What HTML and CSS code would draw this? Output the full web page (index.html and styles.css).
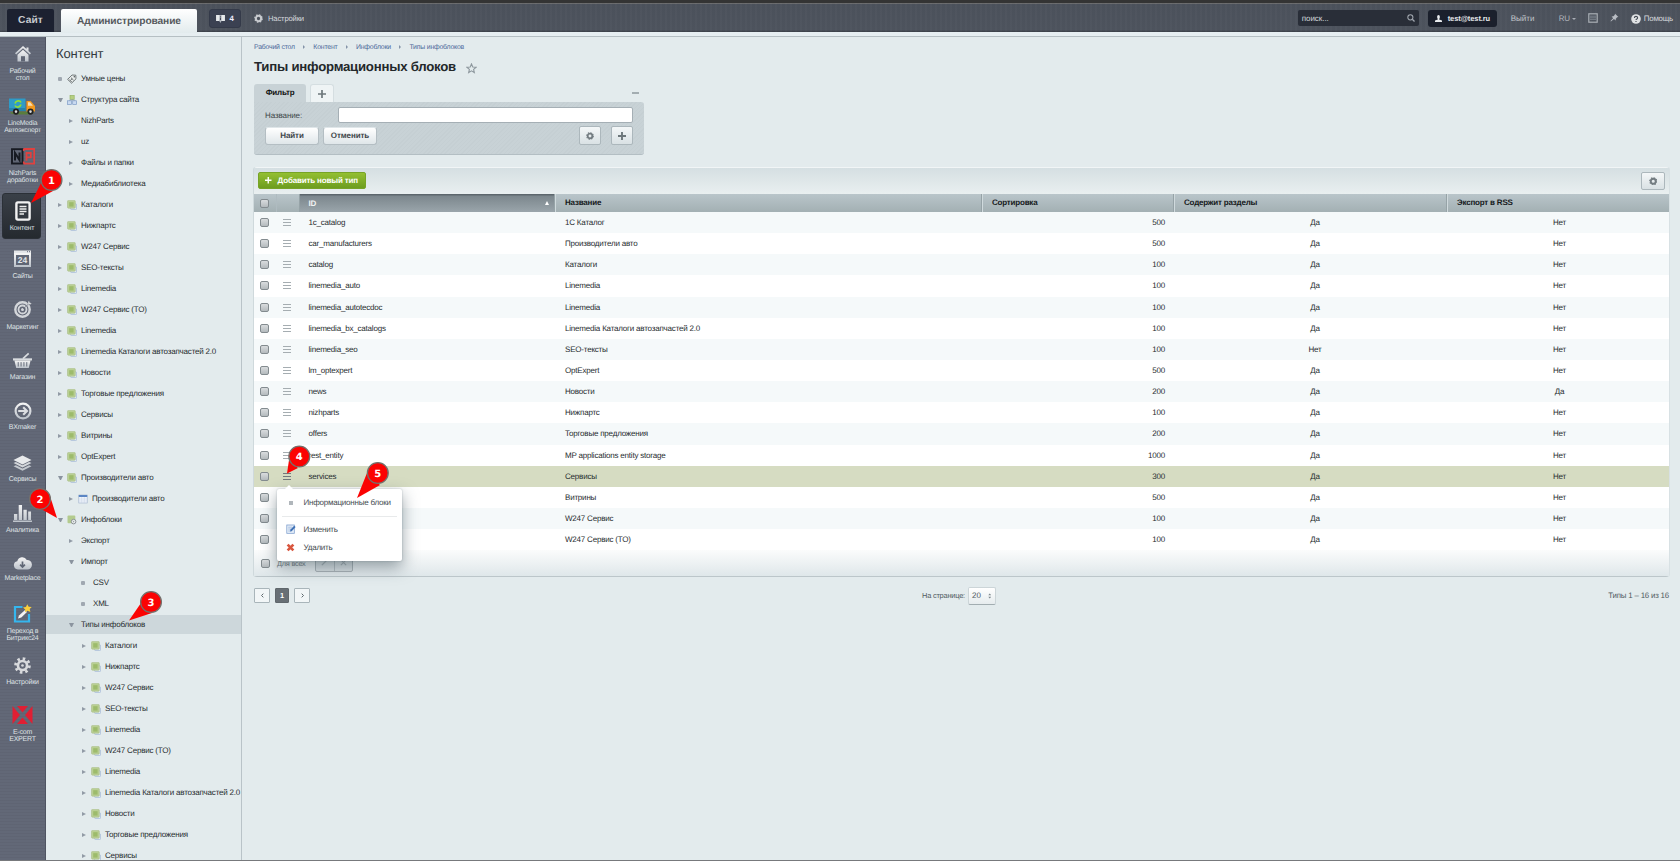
FILE: index.html
```html
<!DOCTYPE html>
<html lang="ru">
<head>
<meta charset="utf-8">
<title>Типы информационных блоков</title>
<link rel="stylesheet" href="styles.css">
</head>
<body>
<svg class="defs" width="0" height="0">
  <defs>
    <linearGradient id="silver" x1="0" y1="0" x2="0" y2="1"><stop offset="0" stop-color="#f4f4f4"/><stop offset="1" stop-color="#bcc2ca"/></linearGradient>
    <symbol id="gear" viewBox="0 0 16 16"><circle cx="8" cy="8" r="4.7" fill="none" stroke="currentColor" stroke-width="3.6"/><circle cx="8" cy="8" r="6.6" fill="none" stroke="currentColor" stroke-width="2.2" stroke-dasharray="2.6 2.58"/></symbol>
    <symbol id="block" viewBox="0 0 10 10"><rect x="3.6" y="3.8" width="6" height="5.8" rx="1" fill="#dfe9f5" stroke="#9fb5d2" stroke-width=".7"/><rect x=".5" y=".4" width="7.8" height="7.8" rx="1" fill="#b9cf93" stroke="#a9bd88" stroke-width=".6"/><rect x="2.2" y="2.2" width="4.4" height="4.4" fill="#9dbb6c"/></symbol>
    <symbol id="blockgear" viewBox="0 0 10 10"><rect x=".5" y=".4" width="7.8" height="7.8" rx="1" fill="#b3cb8e"/><circle cx="6.6" cy="6.6" r="2.3" fill="#e6eaea" stroke="#8d9498" stroke-width="1"/><circle cx="6.6" cy="6.6" r=".6" fill="#8d9498"/></symbol>
    <symbol id="sheet" viewBox="0 0 10 10"><rect x=".8" y="1" width="8.4" height="8" fill="#eef3fa" stroke="#9db0cb" stroke-width=".6"/><rect x=".8" y="1" width="8.4" height="2" fill="#5c86c4"/><path d="M3.6 3v6M6.4 3v6M1 5h8M1 7h8" stroke="#c5d2e4" stroke-width=".4"/></symbol>
    <symbol id="sitemap" viewBox="0 0 10 10"><rect x="3" y=".4" width="4.2" height="4" fill="#b5cf81" stroke="#8fae5a" stroke-width=".6"/><path d="M5.2 4v1.3M2.5 6V5.2h5.3V6" stroke="#8b97a5" stroke-width=".6" fill="none"/><rect x=".5" y="5.8" width="3.9" height="3.7" fill="#c9daf0" stroke="#7d9cc7" stroke-width=".7"/><rect x="5.7" y="5.8" width="3.9" height="3.7" fill="#c9daf0" stroke="#7d9cc7" stroke-width=".7"/></symbol>
    <symbol id="tag" viewBox="0 0 10 10"><path d="M.6 5.4 5 1l3.8.2.2 3.6L4.6 9.2z" fill="#e8eceb" stroke="#555d60" stroke-width=".8"/><path d="M2.4 5.6 4.7 7.9M4 3.7l2.5 2.4M4.8 4.8 4 6" stroke="#444b4e" stroke-width=".8"/><circle cx="7.3" cy="2.7" r=".7" fill="#444b4e"/></symbol>
  </defs>
</svg>

<header class="topbar">
  <a class="tab tab-site">Сайт</a>
  <a class="tab tab-admin">Администрирование</a>
  <a class="notice"><svg viewBox="0 0 10 9" width="9" height="8"><path d="M0 0h4.3v6.8H0zM5.7 0H10v6.8H5.7z" fill="#e6e9ec"/><path d="M4 0h2v6.8L5 9 3.6 6.8z" fill="#aeb4bc"/><path d="M5 1v.9M5 2.8v2.8" stroke="#30354a" stroke-width="1"/></svg><b>4</b></a>
  <a class="top-settings"><svg width="9" height="9"><use href="#gear"/></svg>Настройки</a>
  <div class="search"><span>поиск...</span><svg viewBox="0 0 10 10" width="8" height="8"><circle cx="4.2" cy="4.2" r="3.2" fill="none" stroke="#a0a6ae" stroke-width="1.3"/><path d="m6.600 6.600 2.800 2.800" stroke="#a0a6ae" stroke-width="1.600"/></svg></div>
  <a class="user"><svg viewBox="0 0 8 8" width="7" height="7"><ellipse cx="4" cy="2.2" rx="1.6" ry="2.2" fill="#e9ecef"/><path d="M3.2 3.5h1.6V5L8 6.3V8H0V6.3L3.2 5z" fill="#e9ecef"/></svg>test@test.ru</a>
  <a class="exit">Выйти</a>
  <a class="lang">RU<i></i></a>
  <svg class="panel-ico" viewBox="0 0 10 10" width="10" height="10"><rect x=".8" y=".8" width="8.4" height="8.4" fill="none" stroke="#a9aeb5" stroke-width="1.2"/><path d="M2 3.2h6M2 4.8h6M2 6.400h6" stroke="#848b95" stroke-width=".8"/></svg>
  <svg class="pin-ico" viewBox="0 0 10 10" width="9" height="9"><path d="M5.6.8 9.3 4.4 7.9 4.8 6.5 6.3 6.2 8.3 4.4 6.6 1 9.4.6 9 3.4 5.7 1.8 3.9 3.8 3.5 5.2 2.2z" fill="#b9bdc4"/></svg>
  <a class="help"><svg viewBox="0 0 10 10" width="10" height="10"><circle cx="5" cy="5" r="4.8" fill="#e0e2e4"/><path d="M3.400 4c0-2.100 3.200-2.100 3.200-.1C6.600 5 5 4.900 5 6.100M5 7v1" stroke="#444a54" stroke-width="1.100" fill="none"/></svg>Помощь</a>
</header>
<div class="strip"></div>

<div class="layout">
  <nav class="rail">
    <a class="r1"><svg viewBox="0 0 18 18" width="18" height="18"><path d="M9 1 1 8.200l1.200 1.200L9 3.300l6.800 6.100L17 8.200l-2.500-2.300V2.500h-2v1.600z" fill="url(#silver)"/><path d="M9 4.800 3.500 9.700V16.500h11V9.700z" fill="url(#silver)"/><path d="M7 16.500v-5.300h4v5.300" fill="#606675"/></svg><span>Рабочий<br>стол</span></a>
    <a class="r2"><svg viewBox="0 0 27 18" width="27" height="18"><ellipse cx="13" cy="16" rx="12" ry="1.600" fill="#5a7d3c"/><path d="M0 1.500h16.500V14H0z" fill="#2f9bc7"/><path d="M0 11h16.500v3H0z" fill="#2583ac"/><path d="M17.500 4h4.200l4.300 5v5.500h-8.500z" fill="#f29a1f"/><path d="M19 5.300h2.200l2.700 3.400H19z" fill="#f8dcb0"/><path d="M6 6.500C7 3.300 11 3.300 12 5.500M12 7.500c-1 3.200-5 3.200-6 1" stroke="#8ddc3a" stroke-width="1.800" fill="none"/><circle cx="7" cy="14.600" r="2.200" fill="#ddd" stroke="#222" stroke-width="1.800"/><circle cx="21.500" cy="14.600" r="2.200" fill="#ddd" stroke="#222" stroke-width="1.800"/></svg><span>LineMedia<br>Автоэксперт</span></a>
    <a class="r3"><svg viewBox="0 0 24 17" width="24" height="17"><rect x="1" y="1.200" width="10.500" height="14.300" fill="none" stroke="#171a22" stroke-width="1.900"/><path d="M4 12.500V5l4.500 7V4.500" stroke="#171a22" stroke-width="2" fill="none"/><path d="M15.500 12.800V5h4.300v4.300h-4" stroke="#e0413f" stroke-width="1.800" fill="none"/><path d="M12.500 1h10.700v14.700H12.500M12.800 1v2M12.800 13.500v2" stroke="#e0413f" stroke-width="1.800" fill="none"/></svg><span>NizhParts<br>доработки</span></a>
    <a class="r4 active"><svg viewBox="0 0 16 20" width="16" height="20"><rect x="1.400" y="1.400" width="13.200" height="17.200" rx="1.500" fill="#33383f" stroke="#f2f2f2" stroke-width="2.400"/><path d="M4.500 5.500h7M4.500 8h7M4.500 10.500h7M4.500 13h4.500" stroke="#eee" stroke-width="1.300"/></svg><span>Контент</span></a>
    <a class="r5"><svg viewBox="0 0 17 17" width="17" height="17"><path d="M0 .5h17V3H0z" fill="#e4e6e9"/><path d="M13 1.700h1M15 1.700h1" stroke="#606675"/><rect x="1" y="4" width="15" height="12" fill="none" stroke="url(#silver)" stroke-width="2"/><text x="8.500" y="13" text-anchor="middle" class="cal">24</text></svg><span>Сайты</span></a>
    <a class="r6"><svg viewBox="0 0 18 18" width="18" height="18"><circle cx="8.500" cy="9.500" r="7.200" fill="none" stroke="#d3d6da" stroke-width="2.400"/><circle cx="8.500" cy="9.500" r="4" fill="none" stroke="#d3d6da" stroke-width="1.800"/><circle cx="8.500" cy="9.500" r="1.500" fill="#d3d6da"/><path d="m9 9 5-5V1.500l1-.8.8 1.800 1.900.7-1 1.200-2 .1z" fill="#dfe1e4" stroke="#606675" stroke-width=".4"/></svg><span>Маркетинг</span></a>
    <a class="r7"><svg viewBox="0 0 20 17" width="19" height="17"><path d="M0 6.200h20v2.300H0z" fill="#d9dcdf"/><path d="m10.500 6.500 6-5.500" stroke="#d9dcdf" stroke-width="1.800"/><path d="M1.500 8.500h17l-1.900 8h-13.200z" fill="url(#silver)"/><path d="M5.500 10.200v4.600M8.500 10.200v4.600M11.500 10.200v4.600M14.500 10.200v4.600" stroke="#606675" stroke-width="1"/></svg><span>Магазин</span></a>
    <a class="r8"><svg viewBox="0 0 18 18" width="18" height="18"><circle cx="9" cy="9" r="7.400" fill="none" stroke="url(#silver)" stroke-width="2.200"/><path d="M4.200 9h8.500M9.200 5.200 13 9l-3.800 3.800" stroke="#dcdee1" stroke-width="2.100" fill="none"/></svg><span>BXmaker</span></a>
    <a class="r9"><svg viewBox="0 0 20 18" width="19" height="17"><path d="m10 .5 9.500 4.800L10 10 .5 5.300z" fill="#e8eaec"/><path d="m.5 8.500 2.500-1.200 7 3.500 7-3.500 2.500 1.200L10 13.200z" fill="#d4d7db"/><path d="M.500 12 3 10.800l7 3.500 7-3.500 2.500 1.200-9.500 4.800z" fill="#c3c8ce"/></svg><span>Сервисы</span></a>
    <a class="r10"><svg viewBox="0 0 20 19" width="19" height="18"><path d="M1 10.500h3.500V17H1zM6 1h3.500v16H6zM11 6h3.500v11H11zM16 8h3v9h-3zM0 17.500h20V19H0z" fill="url(#silver)"/></svg><span>Аналитика</span></a>
    <a class="r11"><svg viewBox="0 0 20 15" width="19" height="14"><path d="M5 14.500a4.500 4.500 0 0 1-.6-8.900A5.500 5.500 0 0 1 14.600 4.200 5 5 0 0 1 15.300 14.500z" fill="url(#silver)"/><path d="M10 6v5M7.400 9.200l2.600 2.600 2.600-2.600" stroke="#606675" stroke-width="1.800" fill="none"/></svg><span>Marketplace</span></a>
    <a class="r12"><svg viewBox="0 0 19 19" width="19" height="19"><path d="M9.500 3H2v14.500h14V10" fill="none" stroke="#35b6ee" stroke-width="2.200"/><path d="m5 14.500 1-3L12 6l2 2-5.700 5.400z" fill="#f3f3f3"/><path d="m14.300.2 1.400 2.500 3 .3-2 2.100.7 2.900-2.900-1.200-2.500 1.500.2-2.900-2.200-1.900 2.900-.6z" fill="#fbcf3b"/></svg><span>Переход в<br>Битрикс24</span></a>
    <a class="r13"><svg viewBox="0 0 18 18" width="17" height="17"><circle cx="9" cy="9" r="4.800" fill="none" stroke="#d8dadd" stroke-width="2.800"/><circle cx="9" cy="9" r="7.300" fill="none" stroke="#d8dadd" stroke-width="3" stroke-dasharray="2.700 3.030"/><circle cx="9" cy="9" r="1.400" fill="#d8dadd"/></svg><span>Настройки</span></a>
    <a class="r14"><svg viewBox="0 0 20 18" width="21" height="18"><path d="M0 0v18l7.500-9zM20 0v18l-7.500-9zM4.500 0h11L10 6.500zM4.500 18h11L10 11.500z" fill="#e01f33"/></svg><span>E-com<br>EXPERT</span></a>
  </nav>

  <aside class="menu">
    <h2>Контент</h2>
    <div class="tree" id="tree"></div>
  </aside>

  <main class="content">
    <div class="crumbs"><a>Рабочий стол</a><i></i><a>Контент</a><i></i><a>Инфоблоки</a><i></i><a>Типы инфоблоков</a></div>
    <h1>Типы информационных блоков<svg viewBox="0 0 12 12" width="11" height="11"><path d="m6 1 1.400 3.300 3.600.3-2.700 2.400.8 3.500L6 8.600l-3.100 1.900.8-3.500L1 4.600l3.600-.3z" fill="none" stroke="#8e989e" stroke-width="1.200"/></svg></h1>

    <section class="filter">
      <div class="filter-tabs"><span class="ftab">Фильтр</span><span class="fadd"><svg viewBox="0 0 8 8" width="8" height="8"><path d="M4 0v8M0 4h8" stroke="#6d777b" stroke-width="1.700"/></svg></span><i class="minus"></i></div>
      <div class="filter-body">
        <div class="frow"><label>Название:</label><div class="input"></div></div>
        <div class="fbtns"><span class="btn">Найти</span><span class="btn">Отменить</span><span class="sq first"><svg width="8" height="8"><use href="#gear"/></svg></span><span class="sq"><svg viewBox="0 0 8 8" width="8" height="8"><path d="M4 0v8M0 4h8" stroke="#6d777b" stroke-width="1.900"/></svg></span></div>
      </div>
    </section>

    <section class="list">
      <div class="toolbar"><a class="add"><svg viewBox="0 0 7 7" width="6.500" height="6.500"><path d="M3.500 0v7M0 3.500h7" stroke="#fff" stroke-width="1.500"/></svg>Добавить новый тип</a><span class="sq"><svg width="8.500" height="8.500"><use href="#gear"/></svg></span></div>
      <div class="grid head"><span class="c"><i class="cb"></i></span><span></span><span class="sorted">ID<i></i></span><span>Название</span><span>Сортировка</span><span>Содержит разделы</span><span>Экспорт в RSS</span></div>
      <div id="rows"></div>
      <div class="foot"><i class="cb"></i><span>Для всех</span><div class="pair"><b><svg viewBox="0 0 8 8" width="7" height="7"><path d="M1 7 7 1" stroke="#a9b2b6" stroke-width="1.600"/></svg></b><b><svg viewBox="0 0 8 8" width="7" height="7"><path d="m1 1 6 6M7 1 1 7" stroke="#a9b2b6" stroke-width="1.300"/></svg></b></div></div>
    </section>

    <div class="pager">
      <span class="pg"><svg viewBox="0 0 6 6" width="5" height="5"><path d="M4 .800 1.800 3 4 5.200" stroke="#5d676c" stroke-width="1.200" fill="none"/></svg></span><span class="pg cur">1</span><span class="pg"><svg viewBox="0 0 6 6" width="5" height="5"><path d="M2 .800 4.200 3 2 5.200" stroke="#5d676c" stroke-width="1.200" fill="none"/></svg></span>
      <span class="per">На странице:</span><span class="sel">20<svg viewBox="0 0 4 7" width="3.500" height="6"><path d="M.3 2.600 2 .6l1.700 2zM.3 4.400 2 6.400l1.700-2z" fill="#7c868b"/></svg></span>
      <span class="total">Типы 1 – 16 из 16</span>
    </div>
  </main>
</div>

<div class="popup">
  <i class="tip"></i>
  <div class="pi"><i class="dot"></i>Информационные блоки</div>
  <hr>
  <div class="pi p2"><svg viewBox="0 0 10 10" width="10" height="10"><rect x=".8" y="1" width="7.500" height="8.300" fill="#e8f0fa" stroke="#7f9fce" stroke-width=".8"/><path d="M2.200 3.200h4M2.200 5h3M2.200 7h4" stroke="#9ab3d8" stroke-width=".8"/><path d="M4 7.400 4.500 5.500 8.200 1.800l1.400 1.300L5.900 6.900z" fill="#3f71b5"/></svg>Изменить</div>
  <div class="pi p3"><svg viewBox="0 0 10 10" width="9" height="9"><path d="m1.800 1.800 6.400 6.400M8.200 1.800 1.800 8.200" stroke="#d9573f" stroke-width="3"/></svg>Удалить</div>
</div>

<svg class="marks" viewBox="0 0 1680 861" width="1680" height="861">
  <g fill="#fb0303">
    <path d="M31 203 41 183 53 191z"/><path d="M57 518 41 509 50 496z"/><path d="M129 620.500 141 603 152 613z"/><path d="M287 473.500 289 460 298 468z"/><path d="M357 498 367 473 380 485z"/>
    <g stroke="#73706c" stroke-width="1.300"><circle cx="51.500" cy="180" r="10.400"/><circle cx="40" cy="499" r="10.400"/><circle cx="151" cy="602" r="10.400"/><circle cx="299.300" cy="456.500" r="10.400"/><circle cx="377.800" cy="473" r="10.400"/></g>
  </g>
  <g class="num"><text x="51.500" y="183.500">1</text><text x="40" y="502.600">2</text><text x="151" y="605.800">3</text><text x="299.300" y="460.200">4</text><text x="377.800" y="476.700">5</text></g>
</svg>
<script src="app.js"></script>
</body>
</html>
```
FILE: styles.css
```css
* { box-sizing: border-box; }
html, body { height: 100%; }
body { margin: 0; overflow: hidden; position: relative; font: 8px "Liberation Sans", Arial, sans-serif; letter-spacing: -.2px; color: #272c2f; background: #e3ebed; text-rendering: geometricPrecision; width: 1680px; height: 861px; border-bottom: 1px solid #77797c; }
.defs { position: absolute; }
i, b { font-style: normal; }
svg { display: block; flex: none; }

.topbar { height: 32px; border-top: 3px solid #343434; background: #4b515b; background-image: repeating-linear-gradient(90deg, rgba(255,255,255,.02) 0 2px, transparent 2px 5px), linear-gradient(#6a6b6d 0 1px, #4b515b 1px, #4d535d 27px, #383d45); display: flex; align-items: flex-start; color: #d5d8dc; padding-left: 7px; }
.tab { font-weight: bold; letter-spacing: .1px; text-align: center; }
.tab-site { width: 47px; height: 23px; margin-top: 6px; background: #1c2130; border-radius: 2px 2px 0 0; font-size: 10.200px; line-height: 24px; color: #c9ccd0; }
.tab-admin { width: 136px; height: 24px; margin: 6px 0 0 7px; background: linear-gradient(#fff, #e2ebed); border-radius: 2px 2px 0 0; font-size: 10.200px; letter-spacing: -.1px; line-height: 25px; color: #55595d; }
.notice { width: 32px; height: 19px; margin: 6px 0 0 12px; border: 1px solid #343a49; border-radius: 3px; background: #3b4152; display: flex; align-items: center; justify-content: center; gap: 4px; color: #eef; font-size: 7.800px; }
.top-settings { display: flex; align-items: center; gap: 5px; margin: 6px 0 0 13px; height: 19px; font-size: 7.700px; }
.top-settings svg { color: #c8cbcf; }
.search { margin: 7px 0 0 auto; width: 121px; height: 16px; background: #292e38; border-radius: 2px; display: flex; align-items: center; justify-content: space-between; padding: 0 4px; letter-spacing: -.05px; }
.user { margin: 7px 0 0 9px; width: 69px; height: 17px; background: #1b202c; border-radius: 3px; display: flex; align-items: center; gap: 6px; padding-left: 7px; font-weight: bold; font-size: 7.500px; letter-spacing: -.1px; color: #e4e7ea; white-space: nowrap; }
.exit { margin: 6px 0 0 14px; line-height: 19px; width: 48px; color: #c3c7cc; letter-spacing: 0; }
.lang { margin-top: 6px; line-height: 19px; width: 29px; color: #b3b8bf; display: flex; align-items: center; gap: 2px; }
.lang i { border: 2px solid transparent; border-top-color: #a9aeb6; border-bottom: 0; }
.panel-ico { margin-top: 10px; }
.pin-ico { margin: 10px 0 0 12px; }
.help { display: flex; align-items: center; gap: 3px; margin: 6px 7px 0 12px; height: 19px; font-size: 7.900px; }
.strip { height: 5px; background: #e6eef1; border-bottom: 1px solid #b5bfc3; }

.layout { display: flex; height: 824px; overflow: hidden; }
.rail { width: 46px; background: #626877; background-image: repeating-linear-gradient(0deg, rgba(0,0,0,.035) 0 1px, transparent 1px 3px); border-right: 1px solid #4f5462; flex: none; color: #dfe2e5; font-size: 7px; letter-spacing: -.2px; line-height: 7px; text-align: center; }
.rail a { display: flex; flex-direction: column; align-items: center; height: 50.500px; }
.rail span { white-space: nowrap; margin-top: 4px; }
.rail .r1 { padding-top: 8px; height: 60px; }
.rail .r1 span { margin-top: 5px; }
.rail .r2 { height: 50px; }
.rail .r2 span { margin-top: 5px; }
.rail .r2, .rail .r3 { font-size: 6.800px; }
.rail .r3 { height: 46px; padding-top: 1px; }
.rail .r3 span { margin-top: 5px; }
.rail .r4 { margin: 0 4px 0 2px; height: 46px; background: linear-gradient(#3a4048, #252a2f); border: 1px solid #2b3037; border-radius: 3px; padding: 7px 0 0 3px; }
.rail .r4 span { margin: 4px 2px 0 0; }
.rail .r5 { padding-top: 11px; height: 61px; }
.rail .r5 span { margin-top: 6px; }
.rail .r6 { height: 52px; }
.rail .r6 span { margin-top: 6px; }
.rail .r7 { height: 50px; }
.rail .r7 span { margin-top: 5px; }
.rail .r8 { height: 53px; }
.rail .r8 span { margin-top: 4px; }
.rail .r9 { height: 49px; }
.rail .r9 span { margin-top: 4px; }
.rail .r10 { height: 52px; }
.rail .r10 span { margin-top: 5px; }
.rail .r11 { height: 48px; }
.rail .r11 span { margin-top: 5px; }
.rail .r12 { height: 53px; }
.rail .r12 span { margin-top: 5px; }
.rail .r13 { height: 49px; }
.rail .r13 span { margin-top: 5px; }
.rail .r14 span { margin-top: 6px; line-height: 6.500px; }
.cal { font: bold 8.500px "Liberation Sans"; fill: #e4e6e9; letter-spacing: 0; }

.menu { width: 196px; flex: none; border-right: 1px solid #b9c3c8; overflow: hidden; }
.menu h2 { margin: 0; font-size: 13px; font-weight: normal; line-height: 17px; padding: 8px 0 0 10px; height: 30.600px; color: #333a3e; letter-spacing: -.1px; }
.node { display: flex; align-items: center; height: 21.030px; white-space: nowrap; }
.node.sel { background: linear-gradient(transparent 1px, #cdd7db 1px 20px, transparent 20px); }
.node svg { margin: 1px 4px 0 5px; width: 10px; height: 10px; }
.node.noico i { margin-right: 8px; }
.node i { width: 4px; flex: none; margin-top: 1px; }
.node .right { border: 2.500px solid transparent; border-left: 4px solid #929ba6; border-right: 0; }
.node .down { border: 2.500px solid transparent; border-top: 4px solid #8b949f; border-bottom: 0; width: 5px; margin-right: -1px; }
.noico .down { margin-right: 7px !important; }
.node .dot { height: 4px; background: #a0a8b1; border-radius: 1px; }

.content { flex: 1; padding: 0 11px 0 12px; }
.crumbs { display: flex; align-items: center; height: 20px; color: #4a6799; font-size: 6.900px; }
.crumbs i { border: 2px solid transparent; border-left: 2.500px solid #8493a8; border-right: 0; margin: 0 8px 0 8.500px; }
h1 { margin: 0; font-size: 13.200px; letter-spacing: -.23px; line-height: 20px; height: 27px; display: flex; align-items: flex-start; color: #23282b; white-space: nowrap; }
h1 svg { margin: 6px 0 0 10px; }

.filter { width: 390px; height: 71px; }
.filter-tabs { display: flex; height: 18px; }
.ftab { width: 52px; background: #c8d2d6; border-radius: 3px 3px 0 0; font-weight: bold; text-align: center; line-height: 18px; color: #111; }
.fadd { width: 24px; margin-left: 4px; background: #eff4f5; border: 1px solid #d5dee1; border-bottom: 0; border-radius: 3px 3px 0 0; display: grid; place-items: center; }
.minus { margin: 8px 5px 0 auto; width: 7px; height: 2px; background: #a3adb1; }
.filter-body { background: #c8d2d6; background-image: repeating-linear-gradient(135deg, rgba(0,0,0,.015) 0 1px, transparent 1px 3px); height: 53px; border-radius: 0 3px 3px 3px; border-bottom: 1px solid #b3bec3; padding: 5px 11px 0; }
.frow { display: flex; height: 16px; align-items: center; }
.frow label { width: 73px; color: #3d4549; letter-spacing: -.1px; padding-top: 1px; }
.input { flex: 1; height: 16px; background: #fff; border: 1px solid #a5afb5; border-radius: 2px; }
.fbtns { display: flex; padding-top: 3px; }
.btn { width: 54px; height: 18px; margin: 1px 4px 0 0; border-radius: 3px; background: linear-gradient(#fff, #dfe6e9); border: 1px solid #b4bec3; border-top-color: #dfe6e9; text-align: center; line-height: 15px; font-weight: bold; color: #3d4549; letter-spacing: -.1px; }
.sq { width: 22px; height: 19px; border: 1px solid #acb7bc; border-radius: 2px; background: linear-gradient(#f4f7f8, #d9e1e4); display: grid; place-items: center; color: #737c81; }
.fbtns .first { margin: 0 10px 0 auto; }

.list { margin-top: 12px; border-radius: 3px; height: 410px; border-bottom: 2px solid #bcc6ca; border-top: 1px solid #f1f5f6; box-shadow: -1px 0 #cfd9dc, 1px 0 #d8e1e4; }
.toolbar { height: 26px; display: flex; justify-content: space-between; padding: 4px; background: linear-gradient(#d5dfe2, #e9eff0); }
.add { width: 108px; height: 17px; background: linear-gradient(#93bf31, #6d9d1f); border: 1px solid #77a426; border-radius: 2px; color: #fff; font-weight: bold; display: flex; align-items: center; padding-left: 6px; gap: 6px; font-size: 8px; letter-spacing: -.15px; white-space: nowrap; }
.toolbar .sq { width: 24px; height: 18px; }
.grid { display: grid; grid-template-columns: 22px 23.500px 255.500px 427px 192px 273px 1fr; align-items: center; height: 21.150px; }
.grid .c { display: grid; justify-items: start; padding-left: 6px; }
.cb { width: 9px; height: 9px; border: 1px solid #838b8f; border-radius: 2px; background: linear-gradient(#d9dcde, #b4babd); display: block; }
.head { height: 18px; padding: 0; background: linear-gradient(#b9c5ca, #a3b0b3); font-weight: bold; color: #15191b; align-items: stretch; }
.head span { padding-left: 9px; line-height: 17px; border-left: 1px solid #d0dadd; box-shadow: -1px 0 #96a3a7; }
.head .c { border: 0; box-shadow: none; align-items: center; padding-left: 6px; }
.head span:nth-child(2) { box-shadow: none; border-color: #afbbc0; }
.head .sorted { background: linear-gradient(#5d676d 0 1px, #7c878d 2px, #9aa5ab); color: #f0f2f3; border: 0; display: flex; align-items: center; justify-content: space-between; padding-right: 6px; }
.sorted i { border: 2.500px solid transparent; border-bottom: 4px solid #fff; border-top: 0; }
.row { background: #fff; }
.row:nth-child(odd) { background: #f5f9fa; }
.row.hot { background: #d6dcc2; }
.row .id { padding-left: 9px; }
.row .nm { padding-left: 10px; }
.row .num { text-align: right; padding-right: 9px; }
.row .mid { text-align: center; padding-left: 9px; }
.row .last { text-align: center; padding-left: 3px; }
.burger { width: 8px; height: 7px; margin-left: 7px; background: linear-gradient(#a5adb1 0 1px, transparent 1px 3px, #a5adb1 3px 4px, transparent 4px 6px, #a5adb1 6px); display: block; }
.hot .burger { filter: brightness(.7); }
.foot { height: 25.600px; background: linear-gradient(#fbfcfc, #dfe7ea); display: flex; align-items: center; padding-left: 7px; color: #737c81; font-size: 7.300px; }
.foot span { margin-left: 7px; }
.pair { display: flex; margin: -1px 0 0 9px; border: 1px solid #aab3b7; border-radius: 2px; height: 18px; background: #d9e0e3; }
.pair b { width: 18px; display: grid; place-items: center; }
.pair b + b { border-left: 1px solid #b3bcc0; }

.pager { display: flex; align-items: center; height: 20px; margin-top: 8.500px; color: #505a5f; font-size: 7.400px; }
.pg { width: 16px; height: 15px; border: 1px solid #a9b5ba; border-radius: 1px; background: #f2f6f7; display: grid; place-items: center; margin-right: 5px; }
.pg.cur { width: 14px; background: #686f75; border-color: #60676c; color: #fff; font-weight: bold; }
.per { margin-left: 607px; width: 46px; }
.pager .sel { font-size: 8px; letter-spacing: 0; width: 28px; height: 18px; border: 1px solid #ccd5d8; border-bottom-color: #a2adb1; border-radius: 2px; background: linear-gradient(#fff, #e6ecee); display: flex; align-items: center; justify-content: space-between; padding: 0 4px 0 3px; }
.total { margin-left: auto; font-size: 7.900px; }

.popup { position: absolute; left: 277px; top: 489px; width: 125px; height: 72px; background: #fff; border-radius: 2px; box-shadow: 0 6px 16px rgba(50,70,80,.5), 0 0 2px rgba(60,80,90,.35); padding: 4px 5px; color: #444b50; }
.tip { position: absolute; left: 8px; top: -4px; border: 4px solid transparent; border-top: 0; border-bottom-color: #fff; }
.pi { display: flex; align-items: center; height: 18px; padding-left: 21.500px; position: relative; white-space: nowrap; letter-spacing: -.23px; }
.pi svg, .pi .dot { position: absolute; left: 4px; }
.pi .dot { width: 4px; height: 4px; background: #b0b6bb; left: 7px; top: 8px; }
.popup hr { border: 0; height: 1px; background: #e8eaeb; margin: 5px 0 3px; }
.popup .p3 { height: 19px; }

.marks { position: absolute; left: 0; top: 0; pointer-events: none; }
.num text { font: bold 10px "DejaVu Sans", sans-serif; fill: #fff; text-anchor: middle; letter-spacing: 0; }
```
FILE: app.js
```js
// Tree entries: [left indent, arrow kind, icon id, label, selected]
const tree = [
  [12, 'dot', 'tag', 'Умные цены'],
  [12, 'down', 'sitemap', 'Структура сайта'],
  [23, 'right', '', 'NizhParts'],
  [23, 'right', '', 'uz'],
  [23, 'right', '', 'Файлы и папки'],
  [23, 'right', '', 'Медиабиблиотека'],
  ...['Каталоги', 'Нижпартс', 'W247 Сервис', 'SEO-тексты', 'Linemedia', 'W247 Сервис (ТО)', 'Linemedia',
    'Linemedia Каталоги автозапчастей 2.0', 'Новости', 'Торговые предложения', 'Сервисы', 'Витрины', 'OptExpert']
    .map(t => [12, 'right', 'block', t]),
  [12, 'down', 'block', 'Производители авто'],
  [23, 'right', 'sheet', 'Производители авто'],
  [12, 'down', 'blockgear', 'Инфоблоки'],
  [23, 'right', '', 'Экспорт'],
  [23, 'down', '', 'Импорт'],
  [35, 'dot', '', 'CSV'],
  [35, 'dot', '', 'XML'],
  [23, 'down', '', 'Типы инфоблоков', true],
  ...['Каталоги', 'Нижпартс', 'W247 Сервис', 'SEO-тексты', 'Linemedia', 'W247 Сервис (ТО)', 'Linemedia',
    'Linemedia Каталоги автозапчастей 2.0', 'Новости', 'Торговые предложения', 'Сервисы']
    .map(t => [36, 'right', 'block', t]),
];
document.getElementById('tree').innerHTML = tree.map(([x, arrow, icon, text, sel]) =>
  `<div class="node${icon ? '' : ' noico'}${sel ? ' sel' : ''}" style="padding-left:${x}px"><i class="${arrow}"></i>${icon ? `<svg><use href="#${icon}"/></svg>` : ''}${text}</div>`).join('');

const rows = [
  ['1c_catalog', '1С Каталог', 500], ['car_manufacturers', 'Производители авто', 500], ['catalog', 'Каталоги', 100],
  ['linemedia_auto', 'Linemedia', 100], ['linemedia_autotecdoc', 'Linemedia', 100],
  ['linemedia_bx_catalogs', 'Linemedia Каталоги автозапчастей 2.0', 100], ['linemedia_seo', 'SEO-тексты', 100, 'Нет'],
  ['lm_optexpert', 'OptExpert', 500], ['news', 'Новости', 200, 'Да', 'Да'], ['nizhparts', 'Нижпартс', 100],
  ['offers', 'Торговые предложения', 200], ['rest_entity', 'MP applications entity storage', 1000],
  ['services', 'Сервисы', 300], ['', 'Витрины', 500], ['', 'W247 Сервис', 100], ['', 'W247 Сервис (ТО)', 100],
];
document.getElementById('rows').innerHTML = rows.map(([id, name, sort, sec = 'Да', rss = 'Нет']) =>
  `<div class="grid row${id === 'services' ? ' hot' : ''}"><span class="c"><i class="cb"></i></span><span><i class="burger"></i></span><span class="id">${id}</span><span class="nm">${name}</span><span class="num">${sort}</span><span class="mid">${sec}</span><span class="last">${rss}</span></div>`).join('');
```
